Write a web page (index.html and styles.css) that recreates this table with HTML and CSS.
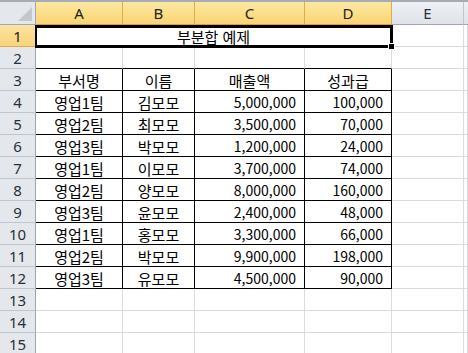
FILE: index.html
```html
<!DOCTYPE html>
<html lang="ko">
<head>
<meta charset="utf-8">
<link rel="stylesheet" href="styles.css">
</head>
<body>
<div class="sheet">
  <div class="topbar"></div>
  <div class="grid">
    <div class="corner"><span class="tri"></span></div>
    <div class="ch sel">A</div>
    <div class="ch sel">B</div>
    <div class="ch sel">C</div>
    <div class="ch sel">D</div>
    <div class="ch">E</div>
    <div class="ch last"></div>

    <div class="rh sel">1</div>
    <div class="c merged">부분합 예제</div>
    <div class="c"></div>
    <div class="c"></div>

    <div class="rh">2</div>
    <div class="c top"></div><div class="c top"></div><div class="c top"></div><div class="c top"></div>
    <div class="c"></div><div class="c"></div>

    <div class="rh">3</div>
    <div class="c t">부서명</div><div class="c t">이름</div><div class="c t">매출액</div><div class="c t">성과급</div>
    <div class="c"></div><div class="c"></div>

    <div class="rh">4</div>
    <div class="c t">영업1팀</div><div class="c t">김모모</div><div class="c t n">5,000,000</div><div class="c t n">100,000</div>
    <div class="c"></div><div class="c"></div>

    <div class="rh">5</div>
    <div class="c t">영업2팀</div><div class="c t">최모모</div><div class="c t n">3,500,000</div><div class="c t n">70,000</div>
    <div class="c"></div><div class="c"></div>

    <div class="rh">6</div>
    <div class="c t">영업3팀</div><div class="c t">박모모</div><div class="c t n">1,200,000</div><div class="c t n">24,000</div>
    <div class="c"></div><div class="c"></div>

    <div class="rh">7</div>
    <div class="c t">영업1팀</div><div class="c t">이모모</div><div class="c t n">3,700,000</div><div class="c t n">74,000</div>
    <div class="c"></div><div class="c"></div>

    <div class="rh">8</div>
    <div class="c t">영업2팀</div><div class="c t">양모모</div><div class="c t n">8,000,000</div><div class="c t n">160,000</div>
    <div class="c"></div><div class="c"></div>

    <div class="rh">9</div>
    <div class="c t">영업3팀</div><div class="c t">윤모모</div><div class="c t n">2,400,000</div><div class="c t n">48,000</div>
    <div class="c"></div><div class="c"></div>

    <div class="rh">10</div>
    <div class="c t">영업1팀</div><div class="c t">홍모모</div><div class="c t n">3,300,000</div><div class="c t n">66,000</div>
    <div class="c"></div><div class="c"></div>

    <div class="rh">11</div>
    <div class="c t">영업2팀</div><div class="c t">박모모</div><div class="c t n">9,900,000</div><div class="c t n">198,000</div>
    <div class="c"></div><div class="c"></div>

    <div class="rh">12</div>
    <div class="c t">영업3팀</div><div class="c t">유모모</div><div class="c t n">4,500,000</div><div class="c t n">90,000</div>
    <div class="c"></div><div class="c"></div>

    <div class="rh">13</div>
    <div class="c"></div><div class="c"></div><div class="c"></div><div class="c"></div><div class="c"></div><div class="c"></div>

    <div class="rh">14</div>
    <div class="c"></div><div class="c"></div><div class="c"></div><div class="c"></div><div class="c"></div><div class="c"></div>

    <div class="rh">15</div>
    <div class="c"></div><div class="c"></div><div class="c"></div><div class="c"></div><div class="c"></div><div class="c"></div>
  </div>
  <div class="selection"></div>
  <div class="handle"></div>
</div>
</body>
</html>
```

FILE: styles.css
```css
* { box-sizing: border-box; }
html, body { margin: 0; padding: 0; background: #fff; }
body { width: 468px; height: 353px; overflow: hidden; }

.sheet {
  position: relative;
  width: 468px;
  height: 353px;
  overflow: hidden;
  font-family: "Noto Sans CJK KR", "Noto Sans", sans-serif;
  font-size: 15px;
  color: #000;
}

.topbar {
  height: 2px;
  background: #a7acb4;
}

.grid {
  display: grid;
  grid-template-columns: 36px 87px 72px 110px 87px 72px 1fr;
  grid-template-rows: 23px repeat(15, 22px);
}

.corner {
  position: relative;
  background: #e4e7ec;
  border-right: 1px solid #9ea7b3;
  border-bottom: 1px solid #9ea7b3;
}
.tri {
  position: absolute;
  right: 3px;
  bottom: 3px;
  width: 0;
  height: 0;
  border-left: 14px solid transparent;
  border-bottom: 14px solid #c3c8cf;
}

.ch {
  display: flex;
  align-items: center;
  justify-content: center;
  background: linear-gradient(#eef1f5, #dfe3e9);
  border-right: 1px solid #c1c7cf;
  border-bottom: 1px solid #9ea7b3;
  color: #27303a;
  font-family: "Noto Sans", "Liberation Sans", sans-serif;
  font-size: 15px;
}
.ch.sel {
  background: linear-gradient(#fce8a4, #f9d572);
  border-right: 1px solid #e2aa4c;
  border-bottom: 1px solid #e29a3a;
  color: #222;
}
.ch.last { border-right: none; }

.rh {
  display: flex;
  align-items: center;
  justify-content: center;
  background: #e4e7ec;
  border-right: 1px solid #9ea7b3;
  border-bottom: 1px solid #bfc5ce;
  color: #27303a;
  font-family: "Noto Sans", "Liberation Sans", sans-serif;
  font-size: 15px;
}
.rh.sel {
  background: linear-gradient(#fbe3a0, #f8d47a);
  border-right: 1px solid #e29a3a;
  border-bottom: 1px solid #e2aa4c;
  color: #222;
}

.c {
  display: flex;
  align-items: center;
  justify-content: center;
  padding-top: 1px;
  border-right: 1px solid #d9dbde;
  border-bottom: 1px solid #d9dbde;
  white-space: nowrap;
}
.c.merged { grid-column: span 4; }
.c.top { border-bottom-color: #000; }
.c.t { border-right-color: #000; border-bottom-color: #000; }
.c.n { justify-content: flex-end; padding-right: 8px; font-size: 14px; }

.selection {
  position: absolute;
  left: 35px;
  top: 25px;
  width: 358px;
  height: 23px;
  border: 3px solid #000;
  border-left-width: 2px;
  pointer-events: none;
}
.handle {
  position: absolute;
  left: 388px;
  top: 43px;
  width: 7px;
  height: 7px;
  background: #000;
  border: 1px solid #fff;
}
```
